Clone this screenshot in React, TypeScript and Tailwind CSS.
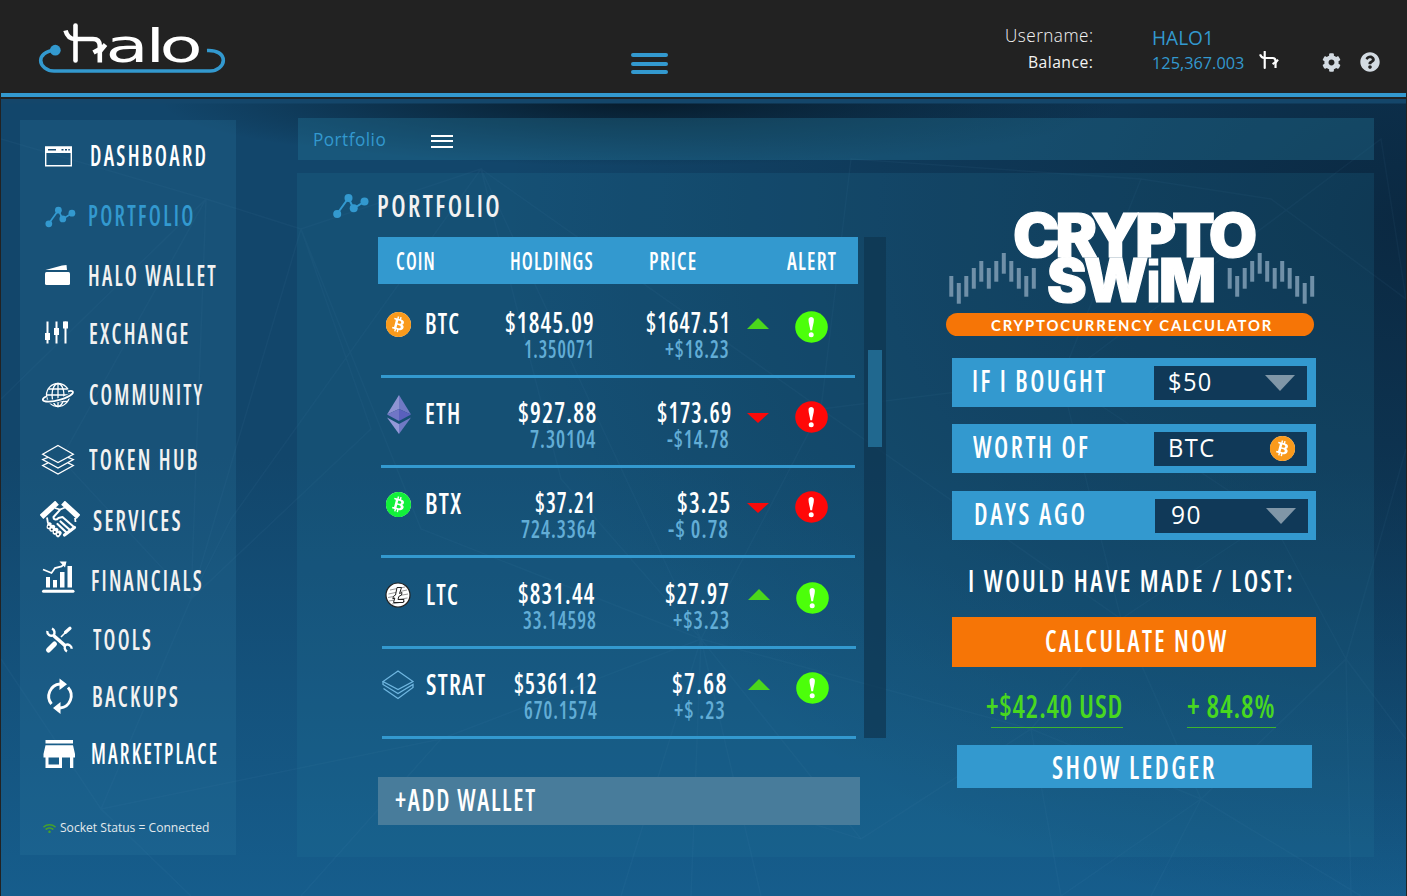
import React, { useLayoutEffect, useRef, useState } from "react";
import { FaBitcoin, FaCog, FaQuestionCircle, FaWifi } from "react-icons/fa";

/* Condenses or widens its text so that it fills the width given by the class. */
function Fit({ text, className }: { text: string; className: string }) {
  const outer = useRef<HTMLSpanElement>(null);
  const inner = useRef<HTMLSpanElement>(null);
  const [scale, setScale] = useState(1);
  useLayoutEffect(() => {
    if (!outer.current || !inner.current) return;
    const tracking = parseFloat(getComputedStyle(inner.current).letterSpacing) || 0;
    setScale(outer.current.clientWidth / (inner.current.offsetWidth - tracking));
  }, [text]);
  return (
    <span ref={outer} className={`block shrink-0 whitespace-pre ${className}`}>
      <span ref={inner} className="inline-block origin-left" style={{ transform: `scaleX(${scale})` }}>
        {text}
      </span>
    </span>
  );
}

const narrow = "[font-stretch:75%] font-semibold";

function Nodes({ className }: { className: string }) {
  return (
    <svg viewBox="0 0 36 26" className={className} fill="#3399cf" stroke="#3399cf">
      <path d="M4 21 L15.500 5 L20.500 15.500 L31.500 8.500" fill="none" strokeWidth="2" />
      <circle cx="4.200" cy="21" r="4" stroke="none" />
      <circle cx="15.500" cy="5" r="4" stroke="none" />
      <circle cx="20.700" cy="15.300" r="4" stroke="none" />
      <circle cx="31.500" cy="8.500" r="4" stroke="none" />
    </svg>
  );
}

function HaloMark({ className }: { className: string }) {
  return (
    <svg viewBox="0 0 44 40" className={className} fill="none" stroke="#fff" strokeWidth="4.800">
      <path d="M12.500 1.500 V37.500" strokeLinecap="round" />
      <path d="M2 7.500 C4 13 7 15.500 12 15.500 H30 Q36.500 15.500 36.500 22 V38" />
      <path d="M30 29 L35 25.500 H37 L42 19" />
    </svg>
  );
}

function Ico({ children }: { children: React.ReactNode }) {
  return (
    <svg viewBox="0 0 40 40" className="h-10 w-10 shrink-0" fill="none" stroke="#fff">
      {children}
    </svg>
  );
}

const icons: Record<string, React.ReactNode> = {
  dashboard: (
    <Ico>
      <path d="M5.700 11.200 H31.300 V29.800 H5.700 Z" strokeWidth="1.400" />
      <path d="M5 10.500 H32 V17 H5 Z" fill="#fff" stroke="none" />
      <path d="M8 13.800 H16 M21.500 13.800 h2 M25 13.800 h2 M28.300 13.800 h1.500" stroke="#174a70" strokeWidth="1.600" />
    </Ico>
  ),
  portfolio: (
    <span className="flex h-10 w-10 shrink-0 items-center pl-[5px]">
      <Nodes className="mt-[2px] h-[22px] w-[31px]" />
    </span>
  ),
  wallet: (
    <Ico>
      <rect x="5" y="16" width="25" height="13" rx="1.500" fill="#fff" stroke="none" />
      <path d="M5.500 14 L22 9.500 L26.500 9 L27 14 Z" fill="#fff" stroke="none" />
    </Ico>
  ),
  exchange: (
    <Ico>
      <path d="M7.500 7.500 V29.500 M16.500 7.500 V29.500 M25.500 7.500 V29.500" strokeWidth="2" />
      <path d="M5 19 h5 v7 h-5 z M14 14 h5 v7 h-5 z M23 7.500 h5 v7 h-5 z" fill="#fff" stroke="none" />
    </Ico>
  ),
  community: (
    <Ico>
      <g strokeWidth="1.300">
        <circle cx="18" cy="20" r="11.500" />
        <ellipse cx="18" cy="20" rx="6" ry="11.500" />
        <path d="M18 8.500 V31.500 M8.500 14 H27.500 M6.500 20 H29.500 M9 26.500 H27" />
      </g>
      <path d="M28 16.300 C33 15 34 17 32 19 C28 23 14 27.500 6 26.500 C2 26 1.500 24 6 21.500" stroke="#185075" strokeWidth="4" />
      <path d="M28 16.300 C33 15 34 17 32 19 C28 23 14 27.500 6 26.500 C2 26 1.500 24 6 21.500" strokeWidth="1.800" />
    </Ico>
  ),
  token: (
    <Ico>
      <g strokeWidth="1.300">
        <path d="M18 5.500 L33.300 14.300 L18 22.500 L2.700 14.300 Z" />
        <path d="M8 17.300 L2.700 19.500 L18 28 L33.300 19.500 L28 17.300" />
        <path d="M8 22.800 L2.700 25.500 L18 34 L33.300 25.500 L28 22.800" />
      </g>
    </Ico>
  ),
  services: (
    <Ico>
      <path d="M3.500 14 L15 3.500 M25 3.500 L36.500 14" strokeWidth="5.500" strokeLinecap="square" />
      <path d="M15 7 L20 8.500 L25 6.500 M7 16.500 L8 22.500 M35 17 L35.500 21" strokeWidth="1.800" />
      <path d="M20 8.800 L13.500 16 C13.500 19 16.500 19.300 18.500 17 L22.500 16 L34.500 26.500" strokeWidth="2" strokeLinejoin="round" />
      <path d="M20.500 20.500 L30.500 29.500 M17.500 23 L26.500 31.500" strokeWidth="2.200" strokeLinecap="round" />
      <path d="M34.500 26.500 L24.500 34" strokeWidth="3.200" strokeLinecap="round" />
      <path d="M9.500 23.500 L8.800 26 M13 26 L11.500 28.500 M16.200 29 L14.800 31.500 M19.500 32 L18 34" strokeWidth="4.500" strokeLinecap="round" />
      <path d="M8.700 25.700 h.1 M11.700 28.400 h.1 M14.800 31 h.1 M18 33.300 h.1" stroke="#16384f" strokeWidth="1.900" strokeLinecap="round" />
    </Ico>
  ),
  financials: (
    <Ico>
      <path d="M3.500 30.200 H33" strokeWidth="3" strokeLinecap="round" />
      <path d="M6 16 h4 v10.500 h-4 z M13 19 h4 v7.500 h-4 z M20 11 h4.500 v15.500 h-4.500 z M27.500 5 h4.500 v21.500 h-4.500 z" fill="#fff" stroke="none" />
      <path d="M3 8.500 L11.500 12 L15 7 L21.500 5.500 L25 2.500" strokeWidth="1.800" />
      <path d="M19.500 .5 H26.500 L25 6.500 Z" fill="#fff" stroke="none" />
    </Ico>
  ),
  tools: (
    <Ico>
      <path d="M8.500 30 L14.500 24" strokeWidth="5" strokeLinecap="round" />
      <path d="M21 17 L27 11" strokeWidth="1.600" />
      <path d="M25.500 12.300 L30 8.300" strokeWidth="3.200" strokeLinecap="round" />
      <path d="M13.500 15.500 L25.500 26" strokeWidth="3.600" />
      <path d="M7.300 11 A4.300 4.300 0 0 0 13.500 15.300 A4.400 4.400 0 0 0 12 8.500" strokeWidth="2.400" />
      <path d="M31.700 28.800 A4.300 4.300 0 0 0 25.500 25 A4.400 4.400 0 0 0 27 31.500" strokeWidth="2.400" />
    </Ico>
  ),
  backups: (
    <Ico>
      <path d="M11.500 27 A12.300 12.300 0 0 1 20 7" strokeWidth="2.900" />
      <path d="M28 10.500 A12.300 12.300 0 0 1 20 31" strokeWidth="2.900" />
      <path d="M19.500 1.500 L27 7.300 L19.500 13 Z M20.500 25 L13 31 L20.500 37 Z" fill="#fff" stroke="none" />
    </Ico>
  ),
  market: (
    <Ico>
      <path d="M5.500 6 H33 V9.500 H5.500 Z M5.500 11.300 H33 L35 20 V23.500 H33.300 V34 H30 V23.500 H22 V34 H5.500 V23.500 H3.500 V20 Z M8.500 23.500 V30.500 H19 V23.500 Z" fill="#fff" stroke="none" fillRule="evenodd" />
    </Ico>
  ),
};

const menu = [
  { id: "dashboard", text: "DASHBOARD", row: "mt-[12px]", label: "ml-[10px] w-[116px] text-white" },
  { id: "portfolio", text: "PORTFOLIO", row: "mt-[12px]", label: "ml-[8px] w-[105px] text-[#3399cf]" },
  { id: "wallet", text: "HALO WALLET", row: "mt-[12px]", label: "ml-[8px] w-[128px] text-[#f2f2f2]" },
  { id: "exchange", text: "EXCHANGE", row: "mt-[10px]", label: "ml-[9px] w-[99px] text-[#f2f2f2]" },
  { id: "community", text: "COMMUNITY", row: "mt-[13px]", label: "ml-[9px] w-[113px] text-[#f2f2f2]" },
  { id: "token", text: "TOKEN HUB", row: "mt-[17px]", label: "ml-[9px] w-[108px] text-[#f2f2f2]" },
  { id: "services", text: "SERVICES", row: "mt-[13px]", label: "ml-[13px] w-[88px] text-[#f2f2f2]" },
  { id: "financials", text: "FINANCIALS", row: "mt-[12px]", label: "ml-[11px] w-[111px] text-[#f2f2f2]" },
  { id: "tools", text: "TOOLS", row: "mt-[11px]", label: "ml-[13px] w-[58px] text-[#f2f2f2]" },
  { id: "backups", text: "BACKUPS", row: "mt-[9px]", label: "ml-[12px] w-[86px] text-[#f2f2f2]" },
  { id: "market", text: "MARKETPLACE", row: "mt-[9px]", label: "ml-[11px] w-[126px] text-white" },
];

function Sidebar() {
  return (
    <nav className="flex h-[735px] w-[216px] flex-col bg-[#2a78a0]/25 pl-5">
      {menu.map((m) => (
        <div key={m.id} className={`flex h-12 shrink-0 items-center ${m.row}`}>
          {icons[m.id]}
          <Fit text={m.text} className={`${narrow} pb-[2px] text-[28px] leading-[44px] tracking-[3px] ${m.label}`} />
        </div>
      ))}
      <div className="mt-[42px] flex items-center gap-[3px] pl-[3px]">
        <FaWifi className="h-[11px] w-[13px] text-[#46a02c]" />
        <Fit text="Socket Status = Connected" className="ml-px w-[149px] text-[12px] leading-[16px] text-[#e4e9ec]" />
      </div>
    </nav>
  );
}

function Coin({ color, className }: { color: string; className: string }) {
  return (
    <span className={`flex items-center justify-center rounded-full bg-white ${className}`}>
      <FaBitcoin className={`h-full w-full shrink-0 scale-[1.04] ${color}`} />
    </span>
  );
}

const coinIcons: Record<string, React.ReactNode> = {
  BTC: <Coin color="text-[#f99a1c]" className="h-[25px] w-[25px]" />,
  BTX: <Coin color="text-[#12f03a]" className="h-[25px] w-[25px]" />,
  ETH: (
    <svg viewBox="0 0 24 39" className="h-[39px] w-6">
      <path d="M12 0 L0 19.500 L12 14 Z" fill="#8f94d3" />
      <path d="M12 0 L24 19.500 L12 14 Z" fill="#7079c4" />
      <path d="M0 19.500 L12 14 V26 Z" fill="#7076c6" />
      <path d="M24 19.500 L12 14 V26 Z" fill="#5a60bd" />
      <path d="M0 22.500 L12 29 V39 Z" fill="#9499d8" />
      <path d="M24 22.500 L12 29 V39 Z" fill="#7079c4" />
    </svg>
  ),
  LTC: (
    <svg viewBox="0 0 26 26" className="h-[26px] w-[26px]" fill="none">
      <circle cx="13" cy="13" r="12" fill="#fff" stroke="#222" strokeWidth="1.200" />
      <path d="M5 8 L20 5 M3.500 12 L22 8 M3 15.500 L23 12 M4 19 L22.500 16 M7 22 L20 19.500" stroke="#999" strokeWidth="1" />
      <path d="M12 5.500 H16.500 L14.500 11.500 L17 10.500 L16.500 13 L13.800 14.500 L13 17.500 H19 L18.300 20.500 H8.500 L9.800 16 L7.800 16.800 L8.500 14.300 L10.500 13 Z" fill="#fff" stroke="#222" strokeWidth="1" />
    </svg>
  ),
  STRAT: (
    <svg viewBox="0 0 32 30" className="h-[30px] w-8" fill="none" stroke="#6fb6e0" strokeWidth="1.300">
      <path d="M16 1 L31 11.500 L16 19.500 L1 11.500 Z" />
      <path d="M1 11.500 V14.500 L16 23.500 L31 14.500 V17.500 L16 28.500 L1.500 18.500" />
    </svg>
  ),
};

const rows = [
  { coin: "BTC", up: true, row: "h-[90px] w-[474px]", cw: "w-[34px]", h: "$1845.09", hw: "mr-[2px] w-[89px]", a: "1.350071", aw: "mr-[2px] w-[70px]", p: "$1647.51", pw: "w-[84px]", d: "+$18.23", dw: "mr-[1px] w-[64px]" },
  { coin: "ETH", up: false, row: "h-[90px] w-[474px]", cw: "w-[35px]", h: "$927.88", hw: "w-[78px]", a: "7.30104", aw: "mr-[1px] w-[65px]", p: "$173.69", pw: "-mr-[1px] w-[74px]", d: "-$14.78", dw: "mr-[1px] w-[62px]" },
  { coin: "BTX", up: false, row: "h-[90px] w-[474px]", cw: "w-[36px]", h: "$37.21", hw: "mr-[1px] w-[60px]", a: "724.3364", aw: "w-[75px]", p: "$3.25", pw: "w-[53px]", d: "-$ 0.78", dw: "mr-[2px] w-[60px]" },
  { coin: "LTC", up: true, row: "h-[91px] w-[474px] ml-[1px] pt-[1px]", cw: "w-[32px]", h: "$831.44", hw: "mr-[3px] w-[76px]", a: "33.14598", aw: "mr-[1px] w-[73px]", p: "$27.97", pw: "mr-[2px] w-[64px]", d: "+$3.23", dw: "mr-[2px] w-[56px]" },
  { coin: "STRAT", up: true, row: "h-[90px] w-[474px] ml-[1px]", cw: "w-[59px]", h: "$5361.12", hw: "w-[83px]", a: "670.1574", aw: "w-[73px]", p: "$7.68", pw: "mr-[5px] w-[54px]", d: "+$ .23", dw: "mr-[6px] w-[51px]" },
];

function Alert({ up }: { up: boolean }) {
  return (
    <svg viewBox="0 0 33 32" className="mt-[23px] ml-[26px] h-8 w-[33px] shrink-0">
      <ellipse cx="16.500" cy="16" rx="16.300" ry="15.700" fill={up ? "#4cff0a" : "#ff0808"} />
      <path d="M13.500 8.700 C13.500 5 18.900 5 18.900 8.700 C18.900 12 17.500 15.500 17.100 19.300 H15.300 C14.900 15.500 13.500 12 13.500 8.700 Z" fill="#fff" />
      <circle cx="16.200" cy="23.700" r="2.500" fill="#fff" />
    </svg>
  );
}

function Table() {
  const big = `${narrow} text-[29px] leading-[29px] tracking-[1.500px] text-white`;
  const small = `${narrow} text-[25px] leading-[24px] tracking-[1.200px] text-[#62add6]`;
  return (
    <div className="ml-[45px] flex">
      <div className="w-[486px]">
        <div className={`flex h-[47px] w-[480px] bg-[#3399cf] text-[25px] leading-[46px] tracking-[1.500px] text-white ${narrow}`}>
          <Fit text="COIN" className="ml-[18px] w-[39px]" />
          <Fit text="HOLDINGS" className="ml-[75px] w-[83px]" />
          <Fit text="PRICE" className="ml-[56px] w-[47px]" />
          <Fit text="ALERT" className="ml-[91px] w-[49px]" />
        </div>
        <div className="pt-[4px] pl-[3px]">
          {rows.map((r) => (
            <div key={r.coin} className={`flex items-start border-b-3 border-[#3399cf] ${r.row}`}>
              <span className={`mt-[16px] flex h-10 w-[35px] shrink-0 items-center justify-center ${r.coin === "LTC" || r.coin === "STRAT" ? "pr-[3px]" : ""}`}>
                {coinIcons[r.coin]}
              </span>
              <div className="ml-[9px] w-[75px] shrink-0 pt-[20px]">
                <Fit text={r.coin} className={`${big} ${r.cw}`} />
              </div>
              <div className="flex w-[96px] shrink-0 flex-col items-end pt-[19px]">
                <Fit text={r.h} className={`${big} ${r.hw}`} />
                <Fit text={r.a} className={`${small} ${r.aw}`} />
              </div>
              <div className="flex w-[134px] shrink-0 flex-col items-end pt-[19px]">
                <Fit text={r.p} className={`${big} ${r.pw}`} />
                <Fit text={r.d} className={`${small} ${r.dw}`} />
              </div>
              {r.up ? (
                <svg viewBox="0 0 22 11" className="mt-[30px] ml-[17px] h-[11px] w-[22px] shrink-0">
                  <path d="M0 11 L11 0 L22 11 Z" fill="#4bd61c" />
                </svg>
              ) : (
                <svg viewBox="0 0 22 10" className="mt-[35px] ml-[17px] h-[10px] w-[22px] shrink-0">
                  <path d="M0 0 H22 L11 10 Z" fill="#f90909" />
                </svg>
              )}
              <Alert up={r.up} />
            </div>
          ))}
        </div>
      </div>
      <div className="flex h-[501px] w-[22px] justify-center bg-[#0e3550]/70 pt-[113px]">
        <div className="h-[97px] w-[14px] bg-[#20688f]" />
      </div>
    </div>
  );
}

const wave = [23, 30, 23, 15, 8, 15, 8, 0, 8, 15, 23, 15];

function Swim() {
  return (
    <svg viewBox="0 0 368 96" className="h-24 w-[368px] overflow-visible" fontFamily="Inter, sans-serif" fontWeight="900" fill="#fff">
      {wave.map((y, i) => (
        <React.Fragment key={i}>
          <rect x={3.3 + i * 7.5} y={45 + y} width="4" height="20.700" fill="#7090a8" />
          <rect x={364.2 - i * 7.5} y={45 + y} width="4" height="20.700" fill="#7090a8" />
        </React.Fragment>
      ))}
      <g stroke="#fff" strokeWidth="1.200">
        <text x="67" y="49" fontSize="60" textLength="240" lengthAdjust="spacingAndGlyphs" letterSpacing="-4">CRYPTO</text>
        <text x="101" y="93.500" fontSize="60" textLength="166" lengthAdjust="spacingAndGlyphs" letterSpacing="-3">
          SW<tspan fontFamily="Liberation Sans" fontWeight="700">i</tspan>M
        </text>
      </g>
    </svg>
  );
}

function Down() {
  return (
    <svg viewBox="0 0 30 16" className="h-4 w-[30px]">
      <path d="M0 0 H30 L15 16 Z" fill="#8096a7" />
    </svg>
  );
}

function Calculator() {
  const label = `${narrow} pb-[3px] text-[30px] leading-[44px] tracking-[3px] text-white`;
  const field = "flex h-[34px] w-[153px] items-center justify-between bg-[#103958]";
  const value = "pb-[3px] text-[25px] leading-[29px] font-medium tracking-[1.500px] text-white";
  return (
    <section className="flex w-[370px] flex-col pt-[35px]">
      <Swim />
      <div className="mt-[9px] flex h-[23px] w-[368px] items-center justify-center rounded-full bg-[#f67506]">
        <Fit text="CRYPTOCURRENCY CALCULATOR" className="ml-[2px] w-[280px] font-[Lato] text-[16px] leading-[23px] font-bold tracking-[2px] text-white" />
      </div>
      <div className="mt-[22px] ml-[6px] flex h-[49px] w-[364px] items-center bg-[#3399cf]">
        <Fit text="IF I BOUGHT" className={`ml-[20px] w-[133px] ${label}`} />
        <div className={`ml-[49px] pr-[12px] pl-[14px] ${field}`}>
          <Fit text="$50" className={`w-[43px] ${value}`} />
          <Down />
        </div>
      </div>
      <div className="mt-[17px] ml-[6px] flex h-[49px] w-[364px] items-center bg-[#3399cf]">
        <Fit text="WORTH OF" className={`ml-[21px] w-[115px] ${label}`} />
        <div className={`ml-[66px] pr-[12px] pl-[14px] ${field}`}>
          <Fit text="BTC" className={`w-[46px] ${value}`} />
          <Coin color="text-[#f99a1c]" className="h-[25px] w-[25px]" />
        </div>
      </div>
      <div className="mt-[18px] ml-[6px] flex h-[49px] w-[364px] items-center bg-[#3399cf]">
        <Fit text="DAYS AGO" className={`ml-[22px] w-[111px] ${label}`} />
        <div className={`ml-[70px] pr-[12px] pl-[16px] ${field}`}>
          <Fit text="90" className={`w-[30px] ${value}`} />
          <Down />
        </div>
      </div>
      <Fit text="I WOULD HAVE MADE / LOST:" className={`mt-[16px] ml-[22px] w-[325px] ${narrow} text-[31px] leading-[48px] tracking-[3px] text-white`} />
      <div className="mt-[13px] ml-[6px] flex h-[50px] w-[364px] bg-[#f67506]">
        <Fit text="CALCULATE NOW" className={`ml-[93px] w-[181px] ${narrow} text-[31px] leading-[47px] tracking-[3px] text-white`} />
      </div>
      <div className={`mt-[19px] flex text-[32px] leading-[39px] text-[#48d81f] ${narrow}`}>
        <div className="ml-[40px] w-[137px]">
          <Fit text="+$42.40 USD" className="w-[136px] tracking-[1px]" />
          <div className="mt-[2px] ml-[5px] h-px w-[132px] bg-[#3fb52c]" />
        </div>
        <div className="ml-[64px] w-[89px]">
          <Fit text="+ 84.8%" className="w-[88px] tracking-[1px]" />
          <div className="mt-[2px] h-px w-[89px] bg-[#3fb52c]" />
        </div>
      </div>
      <div className="mt-[17px] ml-[11px] flex h-[43px] w-[355px] bg-[#3399cf]">
        <Fit text="SHOW LEDGER" className={`ml-[95px] w-[162px] ${narrow} text-[32px] leading-[43px] tracking-[3px] text-white`} />
      </div>
    </section>
  );
}

function Header() {
  return (
    <header className="flex h-[93px] bg-[#222222]">
      <svg viewBox="0 0 240 93" className="h-[93px] w-[240px] shrink-0">
        <g fill="none" stroke="#3399cf" strokeWidth="3.600">
          <path d="M55 50 C45 51 40.700 56 40.700 60.500 C40.700 66 47 71 54 71 H210 C217 71 223.300 66 223.300 60.500 C223.300 54 217 50 207 50.500" />
        </g>
        <circle cx="55.300" cy="50.200" r="5.400" fill="#3399cf" />
        <g fill="none" stroke="#fff" strokeWidth="4.600">
          <path d="M75.500 25.500 V60.500" strokeLinecap="round" />
          <path d="M65.500 30.500 C67 36 70 39 75 39 H93 Q99.800 39 99.800 46 V62.500" />
          <path d="M93.500 52.500 L98 50 H101 L105.500 44.500" />
        </g>
        <text transform="translate(104 61.500) scale(1.500 1)" x="1 27.600 37" fontFamily="DejaVu Sans" fontSize="47" fill="#fff">alo</text>
      </svg>
      <div className="mt-[53px] ml-[391px] flex h-[21px] w-[37px] flex-col justify-between">
        <span className="h-[4px] rounded-xs bg-[#3399cf]" />
        <span className="h-[4px] rounded-xs bg-[#3399cf]" />
        <span className="h-[4px] rounded-xs bg-[#3399cf]" />
      </div>
      <div className="ml-[337px] flex w-[88px] flex-col items-end pt-[21px] text-[#f4f4f4]">
        <Fit text="Username:" className="w-[88px] text-[18px] leading-[28px] font-light tracking-[.5px]" />
        <Fit text="Balance:" className="w-[65px] text-[17px] leading-[26px] tracking-[.5px]" />
      </div>
      <div className="ml-[59px] w-[92px] pt-[24px] text-[#3399cf]">
        <Fit text="HALO1" className="w-[62px] text-[20px] leading-[28px]" />
        <Fit text="125,367.003" className="w-[92px] text-[17px] leading-[21px]" />
      </div>
      <HaloMark className="mt-[51px] ml-[15px] h-[18px] w-[20px]" />
      <FaCog className="mt-[53px] ml-[43px] h-[19px] w-[19px] text-[#d3dbe2]" />
      <FaQuestionCircle className="mt-[52px] ml-[19px] h-[20px] w-[20px] text-[#d3dbe2]" />
    </header>
  );
}

function Mesh() {
  return (
    <svg viewBox="0 0 1405 797" className="pointer-events-none absolute inset-0 h-full w-full" fill="none" stroke="#6fb8d8" strokeOpacity=".05" strokeWidth="1.500">
      <path d="M0 40 L205 100 L0 300 M205 100 L190 500 L60 360 L205 100 L300 130 L190 500 L230 420 L480 70 L300 130 L420 430 L700 540 L480 70 L560 380 L700 540 L820 310 L480 70 M300 130 L370 330 L190 500 L100 710 L190 797 M100 710 L0 560 M100 710 L440 640 L700 540 L620 797 M700 540 L690 797 M700 540 L760 797 M700 540 L860 740 M440 640 L300 797" />
      <path d="M820 310 L850 60 L1140 80 L1060 280 L820 310 L1120 520 L1200 700 L1030 630 L1120 520 L1060 280 L1380 40 L1405 200 L1270 100 L1140 80 M1120 520 L1270 420 L1345 560 L1200 700 L1345 560 L1405 640 M1200 700 L1150 797 M1200 700 L1360 797 M1200 700 L1060 797 M1345 560 L1350 797 M1345 560 L1405 350 M700 540 L1030 630 L860 740 L700 690 M1030 630 L1060 797 M1270 420 L1060 280" />
    </svg>
  );
}

export default function App() {
  return (
    <div className="h-[896px] w-[1407px] overflow-hidden bg-[#222222] font-['Open_Sans',sans-serif]">
      <Header />
      <div className="mx-px h-[4px] bg-[#3399cf]" />
      <div className="relative mx-px mt-[2px] h-[797px] bg-[linear-gradient(to_bottom,#14466a_4px,transparent_5px),radial-gradient(ellipse_480px_65px_at_640px_2px,#071b2b,transparent),radial-gradient(ellipse_900px_700px_at_1405px_120px,rgba(8,31,52,0.75),transparent),linear-gradient(to_bottom,#12466b,#12466b_45%,#165d8c)]">
        <Mesh />
        <div className="relative flex pl-[19px]">
          <div className="pt-[21px]">
            <Sidebar />
          </div>
          <div className="ml-[61px] pt-[19px]">
            <div className="ml-px flex h-[42px] w-[1076px] items-center bg-[#25789c]/35 pl-[15px]">
              <Fit text="Portfolio" className="w-[73px] text-[18px] leading-[40px] font-medium tracking-[.5px] text-[#3399cf]" />
              <div className="mt-[4px] ml-[45px] flex h-[13px] w-[22px] flex-col justify-between">
                <span className="h-[2px] bg-white" />
                <span className="h-[2px] bg-white" />
                <span className="h-[2px] bg-white" />
              </div>
            </div>
            <main className="mt-[13px] flex h-[684px] w-[1077px] bg-[#25789c]/20 pl-9">
              <section className="w-[613px] shrink-0">
                <div className="flex h-[64px] items-start">
                  <Nodes className="mt-[20px] h-[26px] w-[36px]" />
                  <Fit text="PORTFOLIO" className={`mt-[10px] ml-[8px] w-[123px] ${narrow} text-[31px] leading-[45px] tracking-[3px] text-[#f2f2f2]`} />
                </div>
                <Table />
                <div className="mt-[38px] ml-[45px] flex h-[48px] w-[482px] bg-[#487c9b]">
                  <Fit text="+ADD WALLET" className={`ml-[17px] w-[140px] ${narrow} text-[30px] leading-[46px] tracking-[2px] text-white`} />
                </div>
              </section>
              <Calculator />
            </main>
          </div>
        </div>
      </div>
    </div>
  );
}
